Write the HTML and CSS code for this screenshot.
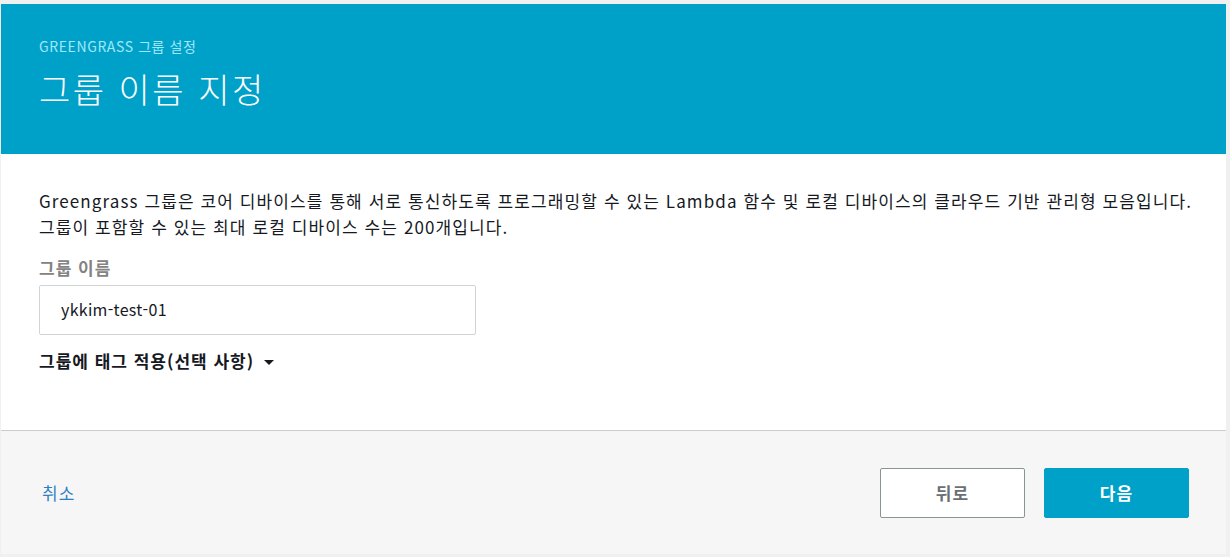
FILE: index.html
```html
<!DOCTYPE html>
<html lang="ko">
<head>
<meta charset="utf-8">
<link rel="stylesheet" href="styles.css">
</head>
<body>
<div class="page">
  <div class="card">
    <header class="hero">
      <div class="eyebrow">GREENGRASS 그룹 설정</div>
      <h1 class="title">그룹 이름 지정</h1>
    </header>
    <section class="body">
      <p class="desc">Greengrass 그룹은 코어 디바이스를 통해 서로 통신하도록 프로그래밍할 수 있는 Lambda 함수 및 로컬 디바이스의 클라우드 기반 관리형 모음입니다.<br>그룹이 포함할 수 있는 최대 로컬 디바이스 수는 200개입니다.</p>
      <label class="label">그룹 이름</label>
      <div class="input">ykkim-test-01</div>
      <div class="toggle">그룹에 태그 적용(선택 사항) <span class="caret"></span></div>
    </section>
    <footer class="foot">
      <a class="cancel">취소</a>
      <div class="actions">
        <button class="btn btn-back">뒤로</button>
        <button class="btn btn-next">다음</button>
      </div>
    </footer>
  </div>
</div>
</body>
</html>
```
FILE: styles.css
```css
* { box-sizing: border-box; }
html, body { margin: 0; padding: 0; }
body {
  background: #f0f0f0;
  font-family: "Noto Sans CJK KR", "Noto Sans", sans-serif;
  color: #16191f;
  width: 1230px;
  height: 557px;
  overflow: hidden;
}
.page { padding: 4px 4px 3px 1px; }
.card {
  background: #fff;
  height: 550px;
  display: flex;
  flex-direction: column;
}
.hero {
  background: #00a1c9;
  height: 150px;
  padding: 32px 38px 0;
}
.eyebrow {
  color: #a0e8f8;
  font-size: 14px;
  line-height: 20px;
  letter-spacing: 0.6px;
}
.title {
  margin: 11px 0 0;
  color: #fff;
  font-weight: 300;
  font-size: 34px;
  line-height: 44px;
  letter-spacing: 2.5px;
}
.body {
  flex: 1;
  padding: 34px 38px 0;
  border-bottom: 1px solid #cccccc;
}
.desc {
  margin: 0;
  font-size: 17px;
  line-height: 26px;
  color: #16191f;
  letter-spacing: 1.1px;
  white-space: nowrap;
}
.label {
  display: block;
  margin-top: 17px;
  font-size: 17px;
  font-weight: 700;
  color: #838383;
  line-height: 22px;
  letter-spacing: 1px;
}
.input {
  margin-top: 6px;
  width: 437px;
  height: 50px;
  border: 1px solid #cfd4d6;
  border-radius: 2px;
  padding: 0 21px;
  font-size: 16px;
  line-height: 46px;
  color: #16191f;
  letter-spacing: 0.3px;
}
.toggle {
  margin-top: 13px;
  font-size: 17px;
  font-weight: 700;
  line-height: 26px;
  color: #16191f;
  letter-spacing: 1px;
  display: flex;
  align-items: center;
  gap: 10px;
}
.caret {
  width: 0; height: 0;
  border-left: 5px solid transparent;
  border-right: 5px solid transparent;
  border-top: 5px solid #16191f;
  margin-top: 2px;
}
.foot {
  height: 123px;
  background: #f6f6f6;
  display: flex;
  align-items: center;
  justify-content: space-between;
  padding: 0 37px 0 41px;
}
.cancel {
  color: #2f7fc4;
  font-size: 17px;
  letter-spacing: 1px;
}
.actions { display: flex; gap: 19px; }
.btn {
  width: 145px;
  height: 50px;
  border-radius: 2px;
  font-family: inherit;
  font-size: 17px;
  font-weight: 700;
  letter-spacing: 1px;
}
.btn-back {
  background: #fff;
  border: 1px solid #879596;
  color: #6b6f73;
}
.btn-next {
  background: #00a1c9;
  border: 1px solid #00a1c9;
  color: #fff;
}
```
